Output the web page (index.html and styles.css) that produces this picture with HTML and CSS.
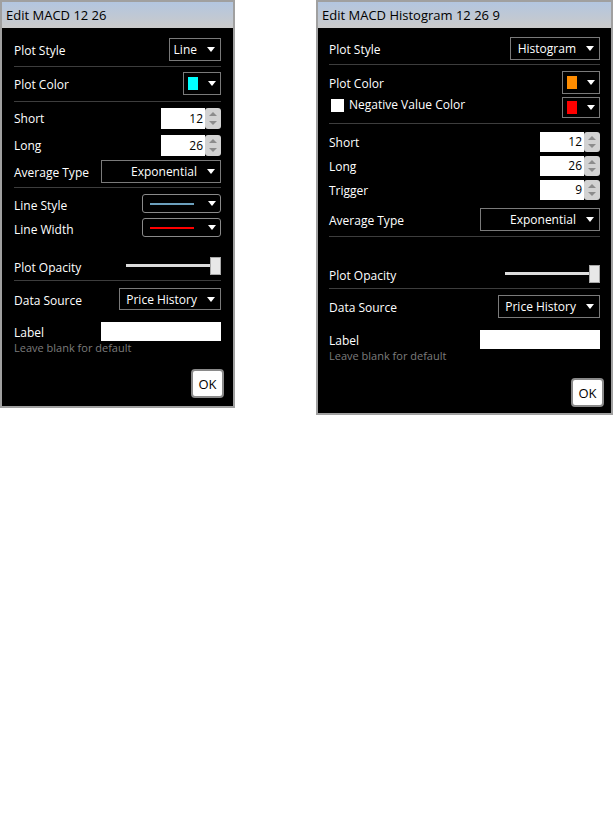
FILE: index.html
```html
<!DOCTYPE html>
<html>
  <head>
    <title>Edit MACD</title>
    <link rel="stylesheet" href="styles.css">
  </head>
  <body>
    <div class="desk">
      <!-- MACD line study -->
      <div class="win w1">
        <div class="title">Edit MACD 12 26</div>
        <div class="body">
          <div class="sec s1">
            <div class="row">
              <span>Plot Style</span>
              <div class="drop drop-style">Line</div>
            </div>
          </div>
          <div class="sec s2">
            <div class="row">
              <span>Plot Color</span>
              <div class="drop color"><span class="swatch cyan"></span></div>
            </div>
          </div>
          <div class="sec s3">
            <div class="row r-spin">
              <span>Short</span>
              <div class="spin"><span class="val">12</span><span class="btns"><i class="up"></i><i class="dn"></i></span></div>
            </div>
            <div class="row r-spin">
              <span>Long</span>
              <div class="spin"><span class="val">26</span><span class="btns"><i class="up"></i><i class="dn"></i></span></div>
            </div>
            <div class="row r-drop">
              <span>Average Type</span>
              <div class="drop drop-avg">Exponential</div>
            </div>
          </div>
          <div class="sec s4">
            <div class="row r-line">
              <span>Line Style</span>
              <div class="drop line"><span class="stroke blue"></span></div>
            </div>
            <div class="row r-line">
              <span>Line Width</span>
              <div class="drop line"><span class="stroke red"></span></div>
            </div>
            <div class="row r-opacity">
              <span>Plot Opacity</span>
              <div class="slider"><span class="track"></span><span class="thumb"></span></div>
            </div>
          </div>
          <div class="sec s5">
            <div class="row r-drop">
              <span>Data Source</span>
              <div class="drop drop-src">Price History</div>
            </div>
            <div class="row r-label">
              <span>Label</span>
              <div class="text-input"></div>
            </div>
            <div class="hint">Leave blank for default</div>
            <div class="actions"><button class="ok">OK</button></div>
          </div>
        </div>
      </div>

      <!-- MACD histogram study -->
      <div class="win w2">
        <div class="title">Edit MACD Histogram 12 26 9</div>
        <div class="body">
          <div class="sec s1">
            <div class="row">
              <span>Plot Style</span>
              <div class="drop drop-hist">Histogram</div>
            </div>
          </div>
          <div class="sec s2">
            <div class="row">
              <span>Plot Color</span>
              <div class="drop color"><span class="swatch orange"></span></div>
            </div>
            <div class="row r-neg">
              <span class="check"><span class="box"></span>Negative Value Color</span>
              <div class="drop color"><span class="swatch red-sw"></span></div>
            </div>
          </div>
          <div class="sec s3">
            <div class="row r-spin">
              <span>Short</span>
              <div class="spin"><span class="val">12</span><span class="btns"><i class="up"></i><i class="dn"></i></span></div>
            </div>
            <div class="row r-spin">
              <span>Long</span>
              <div class="spin"><span class="val">26</span><span class="btns"><i class="up"></i><i class="dn"></i></span></div>
            </div>
            <div class="row r-spin">
              <span>Trigger</span>
              <div class="spin"><span class="val">9</span><span class="btns"><i class="up"></i><i class="dn"></i></span></div>
            </div>
            <div class="row r-drop">
              <span>Average Type</span>
              <div class="drop drop-avg">Exponential</div>
            </div>
          </div>
          <div class="sec s4">
            <div class="row r-opacity">
              <span>Plot Opacity</span>
              <div class="slider"><span class="track"></span><span class="thumb"></span></div>
            </div>
          </div>
          <div class="sec s5">
            <div class="row r-drop">
              <span>Data Source</span>
              <div class="drop drop-src">Price History</div>
            </div>
            <div class="row r-label">
              <span>Label</span>
              <div class="text-input"></div>
            </div>
            <div class="hint">Leave blank for default</div>
            <div class="actions"><button class="ok">OK</button></div>
          </div>
        </div>
      </div>
    </div>
  </body>
</html>
```

FILE: styles.css
```css
body {
  margin: 0;
  background: #fff;
  font-family: 'Open Sans', 'Noto Sans', sans-serif;
  font-size: 12px;
}

.desk {
  display: flex;
  align-items: flex-start;
  gap: 81px;
}

.win {
  box-sizing: border-box;
  border: 2px solid #a0a0a0;
  background: #000;
  display: flex;
  flex-direction: column;
}

.w1 {
  width: 235px;
  height: 408px;
}

.w2 {
  width: 297px;
  height: 415px;
}

.title {
  height: 26px;
  line-height: 26px;
  padding-left: 4px;
  font-size: 13px;
  color: #000;
  background: linear-gradient(#b3c6e0, #cacaca);
}

.body {
  flex: 1;
  padding: 0 12px;
  color: #fff;
}

.w2 .body {
  padding: 0 11px;
}

.sec {
  display: flex;
  flex-direction: column;
  border-bottom: 1px solid #3d3d3d;
}

.sec.s5 {
  border-bottom: none;
}

.row {
  display: flex;
  align-items: center;
  justify-content: space-between;
  height: 23px;
}

.row > span {
  padding-top: 2px;
}

/* section spacing, first window */
.w1 .s1 { padding: 10px 0 5px; }
.w1 .s2 { padding: 5px 0 6px; }
.w1 .s3 { padding: 6px 0 4px; gap: 6px; }
.w1 .s3 .r-drop { margin-top: -2px; }
.w1 .s4 { padding: 6px 0 4px; gap: 5px; }
.w1 .s4 .r-opacity { margin-top: 14px; }
.w1 .s5 { padding: 7px 0 0; }
.w1 .s5 .r-drop { height: 22px; }

/* section spacing, second window */
.w2 .s1 { padding: 9px 0 4px; }
.w2 .s2 { padding: 6px 0 5px; gap: 3px; }
.w2 .s3 { padding: 8px 0 5px; gap: 4px; }
.w2 .s3 .r-drop { margin-top: 4px; }
.w2 .s4 { padding: 27px 0 4px; }
.w2 .s5 { padding: 6px 0 0; }

.r-spin { height: 21px; }
.r-spin > span { padding-top: 0; }
.w2 .r-spin { height: 20px; }
.r-line { height: 19px; }
.r-line > span { padding-top: 4px; }
.r-opacity { height: 20px; }
.r-neg {
  height: 21px;
  align-items: flex-start;
}
.r-label {
  height: 19px;
  margin-top: 12px;
}

.drop {
  box-sizing: border-box;
  height: 100%;
  display: flex;
  align-items: center;
  justify-content: flex-end;
  gap: 10px;
  padding: 0 5px 0 6px;
  border: 1px solid #7a7a7a;
  white-space: nowrap;
}

.drop:after {
  content: '';
  border-left: 4px solid transparent;
  border-right: 4px solid transparent;
  border-top: 5px solid #fff;
}

.drop-style { width: 52px; }
.drop-hist { width: 90px; }
.drop-avg { width: 120px; }
.drop-src { width: 102px; }

.drop.color {
  width: 38px;
  justify-content: space-between;
  padding: 0 4px 0 4px;
}

.swatch {
  width: 13px;
  height: 13px;
}

.cyan { background: #00ffff; }
.orange { background: #ff8c00; }
.red-sw { background: #ff0000; }

.drop.line {
  width: 79px;
  justify-content: space-between;
  padding: 0 4px 0 7px;
  border-color: #8a8a8a;
  border-radius: 3px;
}

.stroke {
  width: 44px;
  height: 2px;
}

.stroke.blue { background: #6b9fbc; }
.stroke.red { background: #ff0000; }

.row > .check {
  display: flex;
  align-items: center;
  gap: 5px;
  margin-left: 2px;
  padding-top: 0;
  line-height: 16px;
}

.check .box {
  width: 13px;
  height: 13px;
  background: #fff;
}

.spin {
  display: flex;
  width: 60px;
  height: 100%;
}

.spin .val {
  flex: 1;
  background: #fff;
  color: #000;
  text-align: right;
  padding-right: 2px;
  line-height: 21px;
}

.w2 .spin .val {
  line-height: 20px;
}

.spin .btns {
  width: 16px;
  background: #d2d2d2;
  border-radius: 3px;
  display: flex;
  flex-direction: column;
  align-items: center;
  justify-content: space-evenly;
}

.spin i {
  border-left: 4px solid transparent;
  border-right: 4px solid transparent;
}

.spin i.up { border-bottom: 4px solid #8c8c8c; }
.spin i.dn { border-top: 4px solid #8c8c8c; }

.slider {
  position: relative;
  width: 95px;
  height: 18px;
}

.slider .track {
  position: absolute;
  left: 0;
  right: 6px;
  top: 7px;
  height: 3px;
  background: #dcdcdc;
}

.slider .thumb {
  position: absolute;
  right: 0;
  top: 0;
  box-sizing: border-box;
  width: 11px;
  height: 18px;
  background: #e8e8e8;
  border: 1px solid #a8a8a8;
}

.text-input {
  width: 120px;
  height: 100%;
  background: #fff;
}

.hint {
  font-size: 11px;
  line-height: 14px;
  color: #7c7c7c;
}

.actions {
  display: flex;
  justify-content: flex-end;
  margin-top: 14px;
  margin-right: -3px;
}

.w2 .actions {
  margin-top: 15px;
  margin-right: -4px;
}

.ok {
  box-sizing: border-box;
  width: 33px;
  height: 29px;
  padding: 0;
  background: #fff;
  border: 2px solid #8a8a8a;
  border-radius: 4px;
  font-family: inherit;
  font-size: 13px;
  color: #000;
}
```
